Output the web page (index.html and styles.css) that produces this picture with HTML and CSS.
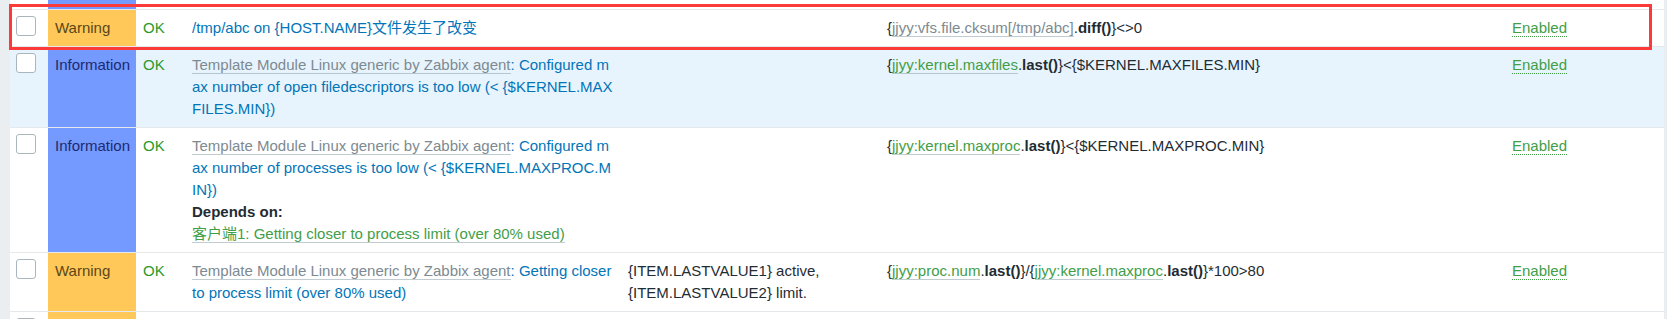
FILE: index.html
```html
<!DOCTYPE html>
<html lang="zh">
<head>
<meta charset="utf-8">
<title>Triggers</title>
<link rel="stylesheet" href="styles.css">
</head>
<body>
<div class="page">
  <table class="list">
    <colgroup>
      <col class="c-check"><col class="c-sev"><col class="c-stat"><col class="c-name"><col class="c-op"><col class="c-expr"><col class="c-status">
    </colgroup>
    <tbody>
      <tr class="row-cut">
        <td></td><td class="sev info"></td><td></td><td></td><td></td><td></td><td></td>
      </tr>
      <tr>
        <td class="check"><input type="checkbox" class="cb"></td>
        <td class="sev warning">Warning</td>
        <td class="ok">OK</td>
        <td class="name"><a class="link">/tmp/abc on {HOST.NAME}文件发生了改变</a></td>
        <td class="op"></td>
        <td class="expr">{<a class="alt grey">jjyy:vfs.file.cksum[/tmp/abc]</a>.<b>diff()</b>}&lt;&gt;0</td>
        <td class="status"><a class="enabled">Enabled</a></td>
      </tr>
      <tr class="hover">
        <td class="check"><input type="checkbox" class="cb"></td>
        <td class="sev info">Information</td>
        <td class="ok">OK</td>
        <td class="name"><a class="alt grey">Template Module Linux generic by Zabbix agent</a><span class="sep">: </span><a class="link">Configured max number of open filedescriptors is too low (&lt; {$KERNEL.MAXFILES.MIN})</a></td>
        <td class="op"></td>
        <td class="expr">{<a class="alt green">jjyy:kernel.maxfiles</a>.<b>last()</b>}&lt;{$KERNEL.MAXFILES.MIN}</td>
        <td class="status"><a class="enabled">Enabled</a></td>
      </tr>
      <tr>
        <td class="check"><input type="checkbox" class="cb"></td>
        <td class="sev info">Information</td>
        <td class="ok">OK</td>
        <td class="name"><a class="alt grey">Template Module Linux generic by Zabbix agent</a><span class="sep">: </span><a class="link">Configured max number of processes is too low (&lt; {$KERNEL.MAXPROC.MIN})</a>
          <div class="depends">Depends on:</div>
          <div><a class="alt green">客户端1: Getting closer to process limit (over 80% used)</a></div>
        </td>
        <td class="op"></td>
        <td class="expr">{<a class="alt green">jjyy:kernel.maxproc</a>.<b>last()</b>}&lt;{$KERNEL.MAXPROC.MIN}</td>
        <td class="status"><a class="enabled">Enabled</a></td>
      </tr>
      <tr>
        <td class="check"><input type="checkbox" class="cb"></td>
        <td class="sev warning">Warning</td>
        <td class="ok">OK</td>
        <td class="name"><a class="alt grey">Template Module Linux generic by Zabbix agent</a><span class="sep">: </span><a class="link">Getting closer to process limit (over 80% used)</a></td>
        <td class="op">{ITEM.LASTVALUE1} active, {ITEM.LASTVALUE2} limit.</td>
        <td class="expr">{<a class="alt green">jjyy:proc.num</a>.<b>last()</b>}/{<a class="alt green">jjyy:kernel.maxproc</a>.<b>last()</b>}*100&gt;80</td>
        <td class="status"><a class="enabled">Enabled</a></td>
      </tr>
      <tr class="row-tail">
        <td class="check"><input type="checkbox" class="cb"></td>
        <td class="sev warning"></td>
        <td></td>
        <td></td>
        <td></td>
        <td></td>
        <td></td>
      </tr>
    </tbody>
  </table>
  <div class="mark"></div>
</div>
</body>
</html>
```

FILE: styles.css
```css
html, body {
  margin: 0;
  padding: 0;
}

body {
  background: #ebeef0;
  font-family: "Liberation Sans", Arial, "Noto Sans CJK SC", sans-serif;
  font-size: 15px;
  line-height: 22px;
  color: #1f2c33;
  overflow: hidden;
  height: 319px;
}

.page {
  position: relative;
  padding: 0 3px 0 10px;
  height: 319px;
  overflow: hidden;
}

.list {
  width: 1654px;
  table-layout: fixed;
  border-collapse: separate;
  border-spacing: 0;
  background: #fff;
}

.c-check { width: 38px; }
.c-sev { width: 88px; }
.c-stat { width: 49px; }
.c-name { width: 436px; }
.c-op { width: 259px; }
.c-expr { width: 625px; }
.c-status { width: 159px; }

.list td {
  padding: 7px 7px 7px 7px;
  vertical-align: top;
  border-top: 1px solid #e6e9eb;
}

.row-cut td {
  height: 9px;
  padding: 0;
  border-top: none;
}

.row-tail td {
  height: 22px;
}

.hover td {
  background: #e8f4fd;
}

.list td.check {
  padding: 6px 0 7px 6px;
}

.cb {
  appearance: none;
  -webkit-appearance: none;
  display: block;
  box-sizing: border-box;
  width: 20px;
  height: 20px;
  margin: 0;
  background: #fff;
  border: 1px solid #aab6bd;
  border-radius: 3px;
}

.list td.sev.warning {
  background: #ffc859;
  color: #5a4718;
}

.list td.sev.info {
  background: #7499ff;
  color: #1d2a6e;
}

.ok {
  color: #2c9a2a;
}

.name {
  word-break: break-all;
}

.link,
.sep {
  color: #0275b8;
}

.alt {
  border-bottom: 1px solid rgba(118, 141, 153, 0.45);
}

.alt.grey {
  color: #7d8a91;
}

.alt.green {
  color: #429e47;
}

.depends {
  font-weight: bold;
  color: #1f2c33;
}

.expr b {
  font-weight: bold;
  color: #1f2c33;
}

.enabled {
  color: #429e47;
  border-bottom: 1px dotted #429e47;
}

.mark {
  position: absolute;
  left: 9px;
  top: 4px;
  width: 1643px;
  height: 46px;
  box-sizing: border-box;
  border: 3px solid #fc3a3a;
  pointer-events: none;
}
```
